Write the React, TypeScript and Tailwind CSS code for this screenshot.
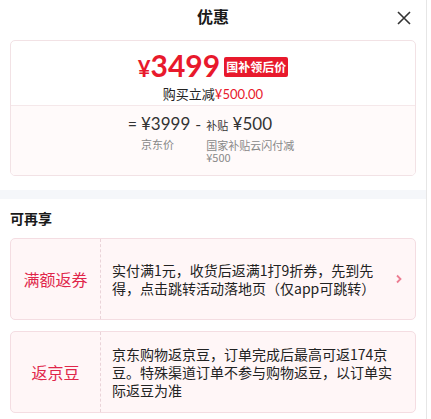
const CJK = { fontFamily: "'Noto Sans CJK SC', sans-serif" };
const NUM = { fontFamily: "Lato, 'Noto Sans CJK SC', sans-serif" };

const Perk = ({ label, text, arrow }: { label: string; text: string; arrow?: boolean }) => (
  <div className="mx-[10px] flex h-[82px] rounded-[5px] border border-[#f4dde2] bg-[#fff6f7]">
    <div className="flex w-[90px] shrink-0 items-center justify-center border-r border-dashed border-[#ead3d8] text-[16px] text-[#e0264a]">
      {label}
    </div>
    <div className="flex flex-1 items-center pl-[11px] pr-[10px]">
      <p className="flex-1 text-[14px] leading-[18px] text-[#222]">{text}</p>
      {arrow && (
        <svg width="8" height="10" viewBox="0 0 8 10" className="ml-[10px] mr-[2px] shrink-0">
          <path d="M2 1.5 L5.5 5 L2 8.5" fill="none" stroke="#ec7d92" strokeWidth="1.8" />
        </svg>
      )}
    </div>
  </div>
);

export default function App() {
  return (
    <div className="flex h-[419px] w-[431px] overflow-hidden bg-white" style={CJK}>
      <div className="w-[427px] shrink-0 border-r border-[#e6e6e6]">
        <div className="relative flex h-[40px] items-start justify-center pt-[4px]">
          <span className="text-[16px] font-bold text-[#1a1a1a]">优惠</span>
          <svg width="14" height="14" viewBox="0 0 14 14" className="absolute right-[15px] top-[11px]">
            <path d="M1 1 L13 13 M13 1 L1 13" stroke="#333" strokeWidth="1.6" />
          </svg>
        </div>

        <div className="mx-[10px] overflow-hidden rounded-[5px] border border-[#f2e2e5]">
          <div className="flex h-[64px] flex-col items-center pt-[8px]">
            <div className="flex items-center">
              <span className="font-bold text-[#e8192c]" style={NUM}>
                <span className="text-[22px]">¥</span>
                <span className="text-[30px] leading-[32px]">3499</span>
              </span>
              <span className="ml-[4px] rounded-[2px] bg-[#e8192c] px-[2px] text-[12px] font-bold leading-[20px] text-white">
                国补领后价
              </span>
            </div>
            <div className="mt-[1px] text-[13px] leading-[16px] text-[#222]">
              购买立减<span className="text-[#e8192c]" style={NUM}>¥500.00</span>
            </div>
          </div>
          <div className="flex h-[70px] justify-center border-t border-[#f5e8ea] bg-[#fffafa] pt-[8px]">
            <div className="flex items-start text-[#333]">
              <span className="mr-[4px] text-[16px] leading-[20px]" style={NUM}>=</span>
              <div className="flex flex-col">
                <span className="text-[17px] leading-[20px]" style={NUM}>¥3999</span>
                <span className="mt-[4px] text-[11px] leading-[12px] text-[#888]">京东价</span>
              </div>
              <span className="mx-[5px] text-[16px] leading-[20px]" style={NUM}>-</span>
              <div className="flex flex-col">
                <span className="text-[17px] leading-[20px]" style={NUM}>
                  <span className="text-[11px]" style={CJK}>补贴</span> ¥500
                </span>
                <span className="mt-[4px] w-[92px] text-[11px] leading-[12px] text-[#888]">国家补贴云闪付减 ¥500</span>
              </div>
            </div>
          </div>
        </div>

        <div className="mt-[14px] h-[9px] bg-[#f5f7fa]" />

        <div className="px-[10px] pb-[10px] pt-[9px] text-[14px] font-bold leading-[20px] text-[#1a1a1a]">可再享</div>

        <div className="flex flex-col gap-[11px]">
          <Perk label="满额返券" text="实付满1元，收货后返满1打9折券，先到先得，点击跳转活动落地页（仅app可跳转）" arrow />
          <Perk label="返京豆" text="京东购物返京豆，订单完成后最高可返174京豆。特殊渠道订单不参与购物返豆，以订单实际返豆为准" />
        </div>
      </div>
    </div>
  );
}
